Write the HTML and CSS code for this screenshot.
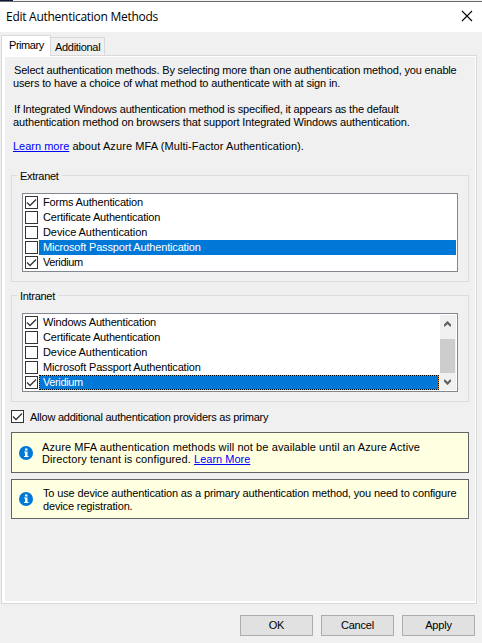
FILE: index.html
```html
<!DOCTYPE html>
<html lang="en">
<head>
  <meta charset="UTF-8">
  <title>Edit Authentication Methods</title>
  <link rel="stylesheet" href="styles.css">
</head>
<body>
  <svg class="symbols">
    <symbol id="tick" viewBox="0 0 11 11"><path d="M1 5.5L4 8.5L10 2.5" stroke="#333" stroke-width="1.3" fill="none"/></symbol>
    <symbol id="info" viewBox="0 0 14 14"><circle cx="7" cy="7" r="7" fill="#0078d7"/><path d="M6 2.5h2.5v2H6zM5 5.5h3.5v4.5h1v1H5v-1h1V6.5H5z" fill="#fff"/></symbol>
  </svg>

  <div class="dialog">
    <div class="edge"></div>
    <div class="titlebar">
      <span class="title">Edit Authentication Methods</span>
      <svg width="12" height="12" viewBox="0 0 12 12"><path d="M1 1L11 11M11 1L1 11" stroke="#000" stroke-width="1.1" fill="none"/></svg>
    </div>

    <div class="tabs">
      <div class="tab active">Primary</div>
      <div class="tab">Additional</div>
    </div>

    <div class="panel">
      <p class="intro">Select authentication methods. By selecting more than one authentication method, you enable<br><span class="loose">users to have a choice of what method to authenticate with at sign in.</span></p>
      <p class="intro">If Integrated Windows authentication method is specified, it appears as the default<br><span class="loose">authentication method on browsers that support Integrated Windows authentication.</span></p>
      <p class="intro more"><a href="#">Learn more</a> about Azure MFA (Multi-Factor Authentication).</p>

      <fieldset>
        <legend>Extranet</legend>
        <div class="list">
          <ul>
            <li><i class="check"><svg><use href="#tick"/></svg></i><span>Forms Authentication</span></li>
            <li><i class="check"></i><span>Certificate Authentication</span></li>
            <li><i class="check"></i><span class="device">Device Authentication</span></li>
            <li class="selected"><i class="check"></i><span>Microsoft Passport Authentication</span></li>
            <li><i class="check"><svg><use href="#tick"/></svg></i><span class="tight">Veridium</span></li>
          </ul>
        </div>
      </fieldset>

      <fieldset>
        <legend>Intranet</legend>
        <div class="list">
          <ul>
            <li><i class="check"><svg><use href="#tick"/></svg></i><span>Windows Authentication</span></li>
            <li><i class="check"></i><span>Certificate Authentication</span></li>
            <li><i class="check"></i><span class="device">Device Authentication</span></li>
            <li><i class="check"></i><span>Microsoft Passport Authentication</span></li>
            <li class="selected focused"><i class="check"><svg><use href="#tick"/></svg></i><span class="tight">Veridium</span></li>
          </ul>
          <div class="scrollbar">
            <svg class="arrow" viewBox="0 0 7 6"><path d="M0 5L3.5 1.5L7 5" stroke="#606060" stroke-width="2.2" fill="none"/></svg>
            <div class="thumb"></div>
            <svg class="arrow" viewBox="0 0 7 6"><path d="M0 1L3.5 4.5L7 1" stroke="#606060" stroke-width="2.2" fill="none"/></svg>
          </div>
        </div>
      </fieldset>

      <label class="allow"><i class="check"><svg><use href="#tick"/></svg></i><span>Allow additional authentication providers as primary</span></label>

      <div class="notice azure">
        <svg><use href="#info"/></svg>
        <p>Azure MFA authentication methods will not be available until an Azure Active<br>Directory tenant is configured. <a href="#">Learn More</a></p>
      </div>
      <div class="notice">
        <svg><use href="#info"/></svg>
        <p>To use device authentication as a primary authentication method, you need to configure<br>device registration.</p>
      </div>
    </div>

    <div class="buttons">
      <button>OK</button>
      <button>Cancel</button>
      <button>Apply</button>
    </div>
  </div>
</body>
</html>
```
FILE: styles.css
```css
* {
  box-sizing: border-box;
}

body {
  margin: 0;
  background: #f0f0f0;
  color: #000;
  font-family: "Liberation Sans", Arial, sans-serif;
  font-size: 11px;
  line-height: 13px;
  letter-spacing: -0.17px;
}

p, ul, fieldset {
  margin: 0;
  padding: 0;
}

a {
  color: #0000ff;
  letter-spacing: 0;
}

.symbols {
  display: none;
}

.dialog {
  width: 482px;
  height: 643px;
  overflow: hidden;
}

/* sliver of the window behind */
.edge {
  height: 1px;
  background: linear-gradient(to right, #0a1a3c 13px, #f4f4f4 13px);
}

.titlebar {
  display: flex;
  justify-content: space-between;
  align-items: center;
  height: 31px;
  padding: 0 9px 2px 6px;
  border-top: 1px solid #6b6b6b;
  background: #fff;
}

.title {
  font: 12px "Open Sans", sans-serif;
  letter-spacing: -0.27px;
}

.tabs {
  display: flex;
  align-items: flex-end;
  height: 24px;
  margin-left: 1px;
  width: 476px;
  border-bottom: 1px solid #d9d9d9;
}

.tab {
  width: 54px;
  height: 19px;
  padding: 3px 4px 0;
  margin-bottom: -1px;
  border: 1px solid #d9d9d9;
  border-left: 0;
  letter-spacing: -0.3px;
}

.tab.active {
  width: 50px;
  height: 21px;
  padding-left: 7px;
  background: #fff;
  border-left: 1px solid #d9d9d9;
  border-bottom: 0;
  letter-spacing: -0.45px;
}

.panel {
  width: 476px;
  height: 548px;
  margin-left: 1px;
  padding: 8px 7px 0 9px;
  border: 1px solid #d9d9d9;
  border-top: 0;
  box-shadow: inset 3px 1px #fff, inset -1px -2px #fff;
}

.intro {
  margin: 0 0 13px 3px;
  white-space: nowrap;
}

.intro .loose {
  margin-left: -1px;
  letter-spacing: -0.13px;
}

.intro.more {
  margin: -2px 0 15px 2px;
  letter-spacing: 0.09px;
}

fieldset {
  width: 458px;
  height: 114px;
  margin-bottom: 6px;
  padding: 10px 10px 0;
  border: 1px solid #dcdcdc;
}

legend {
  margin-left: -5px;
  padding: 2px 3px 0;
  letter-spacing: -0.3px;
}

.list {
  display: flex;
  height: 79px;
  padding: 1px;
  border: 1px solid #828790;
  background: #fff;
}

ul {
  flex: 1;
  list-style: none;
}

li {
  display: flex;
  align-items: center;
  height: 15px;
  padding-left: 1px;
  line-height: 15px;
}

li span {
  flex: 1;
  height: 15px;
  margin-left: 1px;
  padding-left: 4px;
}

li .device {
  letter-spacing: -0.07px;
}

li .tight {
  letter-spacing: -0.38px;
}

.selected span {
  background: #0078d7;
  color: #fff;
}

.focused span {
  box-shadow: inset 0 0 0 1px #ff8728;
  outline: 1px dotted #000;
  outline-offset: -1px;
}

.check {
  flex: none;
  width: 13px;
  height: 13px;
  border: 1px solid #333;
  background: #fff;
}

.check svg {
  display: block;
  width: 11px;
  height: 11px;
}

.scrollbar {
  width: 16px;
  margin-left: 1px;
  background: #f0f0f0;
}

.thumb {
  width: 15px;
  height: 34px;
  background: #cdcdcd;
}

.arrow {
  display: block;
  width: 7px;
  height: 6px;
  margin: 6px 4px 12px;
}

.thumb + .arrow {
  margin: 6px 4px 0;
}

.allow {
  display: flex;
  gap: 6px;
  height: 13px;
  margin: 8px 0 9px;
  line-height: 15px;
  letter-spacing: -0.24px;
}

.notice {
  display: flex;
  align-items: center;
  width: 458px;
  height: 40px;
  padding-left: 7px;
  border: 1px solid #646464;
  background: #ffffe1;
  letter-spacing: -0.14px;
  white-space: nowrap;
}

.notice svg {
  width: 14px;
  height: 14px;
  margin-right: 10px;
}

.notice.azure {
  height: 41px;
  margin-bottom: 6px;
  line-height: 12px;
  letter-spacing: 0.09px;
}

.notice.azure svg {
  margin-right: 9px;
}

.notice p {
  padding-top: 2px;
}

.notice.azure p {
  padding-top: 1px;
}

.buttons {
  display: flex;
  gap: 8px;
  margin: 11px 0 0 240px;
}

button {
  width: 73px;
  height: 21px;
  padding: 0;
  border: 1px solid #adadad;
  background: #e1e1e1;
  font: inherit;
  letter-spacing: -0.17px;
}
```
